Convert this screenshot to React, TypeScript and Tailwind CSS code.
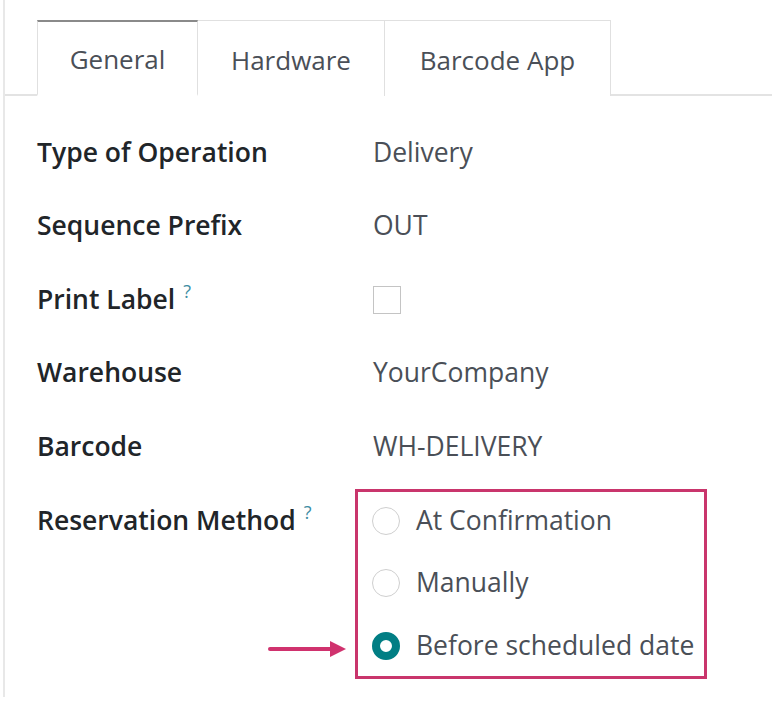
const tabs = [
  { label: "General", width: "w-[161px]", active: true },
  { label: "Hardware", width: "w-[187px]", active: false },
  { label: "Barcode App", width: "w-[226px]", active: false },
];

const fields = [
  { label: "Type of Operation", value: "Delivery" },
  { label: "Sequence Prefix", value: "OUT" },
  { label: "Print Label", help: true, checkbox: true },
  { label: "Warehouse", value: "YourCompany" },
  { label: "Barcode", value: "WH-DELIVERY" },
];

const methods = [
  { label: "At Confirmation", checked: false },
  { label: "Manually", checked: false },
  { label: "Before scheduled date", checked: true },
];

function HelpMark() {
  return (
    <span className="relative -top-[11px] ml-[8px] text-[18px] font-medium text-[#3d8da3] leading-none">?</span>
  );
}

function Radio({ checked }: { checked: boolean }) {
  return checked ? (
    <span className="w-[28px] h-[28px] rounded-full border-[8px] border-[#017e84] bg-white shrink-0" />
  ) : (
    <span className="w-[28px] h-[28px] rounded-full border-[1.5px] border-[#cfcfcf] bg-white shrink-0" />
  );
}

export default function App() {
  return (
    <div
      className="w-[777px] h-[703px] bg-white overflow-hidden"
      style={{ fontFamily: '"Open Sans", "Noto Sans", sans-serif' }}
    >
      <div className="ml-[3px] h-[697px] border-l-2 border-[#e8e8e8]">
        {/* tabs */}
        <div className="pt-[20px] pl-[32px] mr-[5px] flex border-b-2 border-[#e3e3e3]">
          {tabs.map((tab) => (
            <div
              key={tab.label}
              className={`${tab.width} h-[76px] -mb-[2px] pt-[3px] flex items-center justify-center text-[26px] text-[#4a4f57] bg-white border border-[#e0e0e0] ${
                tab.active ? "border-t-2 border-t-[#8a8a8a] border-b-white border-b-2" : "border-l-0 border-b-0"
              }`}
            >
              {tab.label}
            </div>
          ))}
        </div>

        {/* form */}
        <div className="pl-[32px] pt-[20px] flex flex-col">
          {fields.map((f) => (
            <div key={f.label} className="h-[73.5px] flex items-center">
              <div className="w-[336px] text-[26.5px] font-semibold text-[#212529]">
                {f.label}
                {f.help && <HelpMark />}
              </div>
              {f.checkbox ? (
                <span className="w-[28px] h-[28px] border-[1.5px] border-[#c4c4c4] bg-white" />
              ) : (
                <div className="text-[26.5px] text-[#4a4f57]">{f.value}</div>
              )}
            </div>
          ))}

          <div className="relative flex items-start">
            <div className="w-[318px] pt-[17px] text-[26.5px] font-semibold text-[#212529]">
              Reservation Method
              <HelpMark />
            </div>
            <div className="mt-[5px] w-[352px] border-[3px] border-[#c9356c] pt-[9px] pb-[10px] pl-[14px] flex flex-col gap-[22.5px]">
              {methods.map((m) => (
                <div key={m.label} className="h-[40px] flex items-center gap-[16px]">
                  <Radio checked={m.checked} />
                  <span className="text-[26.5px] text-[#4a4f57]">{m.label}</span>
                </div>
              ))}
            </div>
            {/* annotation arrow */}
            <svg
              className="absolute left-[231px] top-[155px]"
              width="80"
              height="20"
              viewBox="0 0 80 20"
            >
              <line x1="2" y1="10" x2="64" y2="10" stroke="#d0326e" strokeWidth="4" strokeLinecap="round" />
              <path d="M62 2 L78 10 L62 18 Z" fill="#d0326e" />
            </svg>
          </div>
        </div>
      </div>
    </div>
  );
}
